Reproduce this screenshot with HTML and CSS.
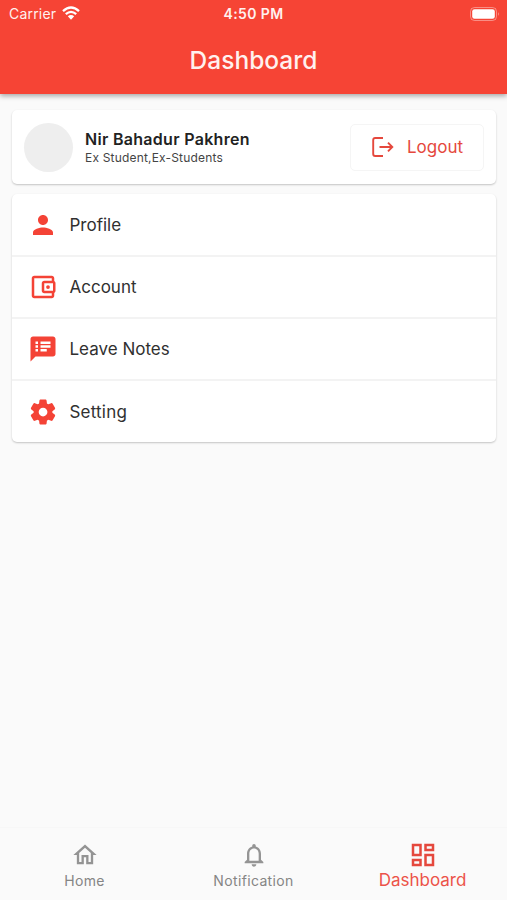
FILE: index.html
```html
<!DOCTYPE html>
<html lang="en">
<head>
<meta charset="utf-8">
<title>Dashboard</title>
<link rel="stylesheet" href="styles.css">
</head>
<body>
<header class="header">
  <div class="status">
    <div class="carrier"><span>Carrier</span>
      <svg class="wifi" viewBox="0 0 18 14"><path d="M1 5.2Q9-2.2 17 5.2M3.8 8.2Q9 3.6 14.2 8.2" fill="none" stroke="currentColor" stroke-width="2.3"/><path d="M5.8 10.3Q9 7.8 12.2 10.3L9 13.8z" fill="currentColor"/></svg>
    </div>
    <div class="time">4:50 PM</div>
    <svg class="battery" viewBox="0 0 30 14"><rect x=".5" y=".5" width="26" height="13" rx="4" fill="none" stroke="currentColor" opacity=".4"/><rect x="2.2" y="2.2" width="22.6" height="9.6" rx="2.3" fill="currentColor"/><path d="M28 5q1.600 2 0 4z" fill="currentColor" opacity=".55"/></svg>
  </div>
  <h1 class="title">Dashboard</h1>
</header>
<main class="content">
  <section class="card user">
    <div class="avatar"></div>
    <div class="identity">
      <div class="name">Nir Bahadur Pakhren</div>
      <div class="role">Ex Student,Ex-Students</div>
    </div>
    <button class="logout">
      <svg class="logout-icon" viewBox="0 0 22 20" fill="none" stroke="currentColor" stroke-width="1.9"><path d="M11 1H3.200Q1.200 1 1.200 3v14q0 2 2 2H11M7.500 10H20M16 5.600l4.300 4.400-4.300 4.400"/></svg>
      <span>Logout</span>
    </button>
  </section>
  <nav class="card menu">
    <a class="row"><svg class="icon" viewBox="0 0 24 24"><path d="M12 12c2.210 0 4-1.790 4-4s-1.790-4-4-4-4 1.790-4 4 1.790 4 4 4zm0 2c-2.670 0-8 1.340-8 4v2h16v-2c0-2.660-5.330-4-8-4z"/></svg><span class="profile">Profile</span></a>
    <a class="row"><svg class="icon" viewBox="0 0 24 24"><path d="M21 7.280V5c0-1.100-.9-2-2-2H5c-1.110 0-2 .9-2 2v14c0 1.100.89 2 2 2h14c1.100 0 2-.9 2-2v-2.280c.59-.35 1-.98 1-1.720V9c0-.74-.41-1.370-1-1.720zM20 9v6h-7V9h7zM5 19V5h14v2h-6c-1.100 0-2 .9-2 2v6c0 1.100.9 2 2 2h6v2H5z"/><circle cx="16" cy="12" r="1.500"/></svg><span class="account">Account</span></a>
    <a class="row"><svg class="icon" viewBox="0 0 24 24"><path d="M20 2H4c-1.100 0-1.990.9-1.990 2L2 22l4-4h14c1.100 0 2-.9 2-2V4c0-1.100-.9-2-2-2zM8 14H6v-2h2v2zm0-3H6V9h2v2zm0-3H6V6h2v2zm7 6h-5v-2h5v2zm3-3h-8V9h8v2zm0-3h-8V6h8v2z"/></svg><span class="notes">Leave Notes</span></a>
    <a class="row"><svg class="icon" viewBox="0 0 24 24"><path d="M19.500 12c0-.23-.01-.45-.03-.68l1.860-1.410c.4-.3.510-.86.260-1.300l-1.870-3.230c-.25-.44-.79-.62-1.250-.42l-2.150.91c-.37-.26-.76-.49-1.170-.68l-.29-2.310C14.800 2.380 14.370 2 13.870 2h-3.730c-.51 0-.94.38-1 .88l-.29 2.310c-.41.190-.8.420-1.170.680l-2.150-.91c-.46-.2-1-.02-1.250.42L2.410 8.620c-.25.440-.14.990.26 1.300l1.860 1.410c-.02.220-.03.440-.03.670s.01.450.03.680l-1.860 1.410c-.4.300-.51.860-.26 1.300l1.870 3.230c.25.440.79.620 1.250.420l2.150-.91c.37.260.76.490 1.170.680l.29 2.310c.06.500.49.880 1 .880h3.730c.5 0 .93-.38.990-.88l.29-2.310c.41-.19.8-.42 1.170-.68l2.150.91c.46.200 1 .02 1.250-.42l1.870-3.230c.25-.44.14-.99-.26-1.300l-1.860-1.410c.03-.23.040-.45.040-.68zm-7.460 3.500c-1.930 0-3.500-1.570-3.500-3.500s1.570-3.500 3.500-3.500 3.500 1.570 3.500 3.500-1.570 3.500-3.500 3.500z"/></svg><span class="setting">Setting</span></a>
  </nav>
</main>
<footer class="tabs">
  <a class="tab"><svg class="tab-icon" viewBox="0 0 24 24"><path d="M12 5.690l5 4.500V18h-2v-6H9v6H7v-7.810l5-4.500M12 3L2 12h3v8h6v-6h2v6h6v-8h3L12 3z"/></svg><span class="tab-home">Home</span></a>
  <a class="tab"><svg class="tab-icon" viewBox="0 0 24 24"><path d="M12 22c1.100 0 2-.9 2-2h-4c0 1.100.9 2 2 2zm6-6v-5c0-3.070-1.630-5.640-4.500-6.320V4c0-.83-.67-1.500-1.500-1.500s-1.500.67-1.500 1.500v.68C7.640 5.360 6 7.920 6 11v5l-2 2v1h16v-1l-2-2zm-2 1H8v-6c0-2.480 1.510-4.500 4-4.500s4 2.020 4 4.500v6z"/></svg><span class="tab-note">Notification</span></a>
  <a class="tab active"><svg class="tab-icon" viewBox="0 0 24 24"><path d="M19 5v2h-4V5h4M9 5v6H5V5h4m10 8v6h-4v-6h4M9 17v2H5v-2h4M21 3h-8v6h8V3zM11 3H3v10h8V3zm10 8h-8v10h8V11zm-10 4H3v6h8v-6z"/></svg><span class="tab-dash">Dashboard</span></a>
</footer>
</body>
</html>
```
FILE: styles.css
```css
* { box-sizing: border-box; }
body {
  margin: 0;
  height: 900px;
  display: flex;
  flex-direction: column;
  background: #fafafa;
  color: #303030;
  font-family: Inter, "Liberation Sans", sans-serif;
  overflow: hidden;
}
.header {
  height: 94px;
  flex: none;
  background: #f64435;
  color: #fff1ef;
  box-shadow: 0 2px 5px rgba(0, 0, 0, .34);
}
.status {
  display: grid;
  grid-template-columns: 1fr auto 1fr;
  align-items: center;
  height: 27px;
  padding: 0 7px;
}
.carrier { display: flex; align-items: center; gap: 6px; padding-left: 2px; font-size: 14px; letter-spacing: .2px; }
.wifi { width: 18px; height: 14px; color: #fff; margin-top: -2px; }
.time { font-size: 14px; font-weight: 600; letter-spacing: .4px; }
.battery { width: 30px; height: 14px; justify-self: end; color: #fff; }
.title {
  margin: 0;
  height: 66px;
  line-height: 66px;
  text-align: center;
  font-size: 24.500px;
  font-weight: 500;
  letter-spacing: 0;
}
.content { flex: 1; padding: 16px 11px 0 12px; display: flex; flex-direction: column; gap: 10px; }
.card {
  background: #fff;
  border-radius: 5px;
  box-shadow: 0 1px 2px rgba(0, 0, 0, .22);
}
.user { height: 74px; display: flex; align-items: center; padding: 0 12px; }
.avatar { width: 49px; height: 49px; border-radius: 50%; background: #eee; }
.identity { margin-left: 12px; flex: 1; white-space: nowrap; }
.name { font-size: 16px; line-height: 20px; font-weight: 600; letter-spacing: .3px; color: #222; }
.role { font-size: 12px; line-height: 16px; letter-spacing: .18px; padding-top: 1px; color: #444; }
.logout {
  width: 134px;
  height: 47px;
  display: flex;
  align-items: center;
  padding: 0 0 0 20.500px;
  gap: 13.500px;
  background: #fff;
  border: 1px solid #f5f5f5;
  border-radius: 5px;
  color: #e5483d;
  font: 400 17px Inter, sans-serif;
}
.logout-icon { width: 22px; height: 20px; }
.menu { height: 248px; display: grid; grid-template-rows: 61px 62px 62px 63px; }
.row { display: flex; align-items: center; padding-left: 15.500px; gap: 12px; font-size: 17px; }
.row + .row { border-top: 2px solid #f3f3f3; }
.icon { width: 30px; height: 30px; fill: #f44336; }
.setting { letter-spacing: .2px; }
.tabs {
  height: 73px;
  flex: none;
  display: grid;
  grid-template-columns: repeat(3, 1fr);
  border-top: 1px solid #f7f7f7;
}
.tab { display: flex; flex-direction: column; align-items: center; padding-top: 13px; color: #858585; font-size: 14px; line-height: 20px; }
.tab-icon { width: 28px; height: 28px; fill: #949494; margin-bottom: 2px; }
.tab-home { letter-spacing: .3px; }
.tab-note { letter-spacing: .35px; }
.active { color: #ec5349; font-size: 17px; }
.active .tab-icon { width: 30px; height: 30px; fill: #e5483d; margin: -1px 0 0; }
```
